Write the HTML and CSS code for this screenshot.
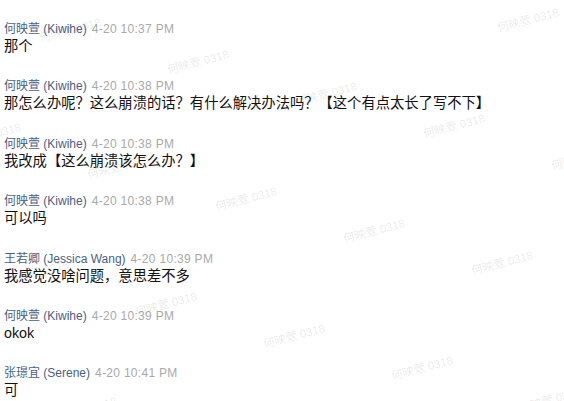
FILE: index.html
```html
<!DOCTYPE html>
<html lang="zh">
<head>
<meta charset="utf-8">
<title>Chat</title>
<link rel="stylesheet" href="styles.css">
</head>
<body>
<div class="chat">
  <div class="msg">
    <div class="meta"><span class="name">何映萱 (Kiwihe)</span><span class="time">4-20 10:37 PM</span></div>
    <div class="text">那个</div>
  </div>
  <div class="msg">
    <div class="meta"><span class="name">何映萱 (Kiwihe)</span><span class="time">4-20 10:38 PM</span></div>
    <div class="text">那怎么办呢？这么崩溃的话？有什么解决办法吗？【这个有点太长了写不下】</div>
  </div>
  <div class="msg">
    <div class="meta"><span class="name">何映萱 (Kiwihe)</span><span class="time">4-20 10:38 PM</span></div>
    <div class="text">我改成【这么崩溃该怎么办？】</div>
  </div>
  <div class="msg">
    <div class="meta"><span class="name">何映萱 (Kiwihe)</span><span class="time">4-20 10:38 PM</span></div>
    <div class="text">可以吗</div>
  </div>
  <div class="msg">
    <div class="meta"><span class="name">王若卿 (Jessica Wang)</span><span class="time">4-20 10:39 PM</span></div>
    <div class="text">我感觉没啥问题，意思差不多</div>
  </div>
  <div class="msg">
    <div class="meta"><span class="name">何映萱 (Kiwihe)</span><span class="time">4-20 10:39 PM</span></div>
    <div class="text">okok</div>
  </div>
  <div class="msg">
    <div class="meta"><span class="name">张璟宜 (Serene)</span><span class="time">4-20 10:41 PM</span></div>
    <div class="text">可</div>
  </div>
</div>
<div class="watermarks" aria-hidden="true">
  <span class="wm" style="left:406px;top:-11px">何映萱 0318</span>
  <span class="wm" style="left:528px;top:20px">何映萱 0318</span>
  <span class="wm" style="left:70px;top:30px">何映萱 0318</span>
  <span class="wm" style="left:198px;top:62px">何映萱 0318</span>
  <span class="wm" style="left:326px;top:94px">何映萱 0318</span>
  <span class="wm" style="left:454px;top:126px">何映萱 0318</span>
  <span class="wm" style="left:582px;top:158px">何映萱 0318</span>
  <span class="wm" style="left:-10px;top:135px">何映萱 0318</span>
  <span class="wm" style="left:118px;top:167px">何映萱 0318</span>
  <span class="wm" style="left:246px;top:199px">何映萱 0318</span>
  <span class="wm" style="left:374px;top:231px">何映萱 0318</span>
  <span class="wm" style="left:502px;top:263px">何映萱 0318</span>
  <span class="wm" style="left:38px;top:272px">何映萱 0318</span>
  <span class="wm" style="left:166px;top:304px">何映萱 0318</span>
  <span class="wm" style="left:294px;top:336px">何映萱 0318</span>
  <span class="wm" style="left:422px;top:368px">何映萱 0318</span>
  <span class="wm" style="left:550px;top:400px">何映萱 0318</span>
  <span class="wm" style="left:86px;top:409px">何映萱 0318</span>
</div>
</body>
</html>
```
FILE: styles.css
```css
html, body {
  margin: 0;
  padding: 0;
  background: #ffffff;
  overflow: hidden;
}
body {
  width: 564px;
  height: 401px;
  position: relative;
  font-family: "Liberation Sans", "Noto Sans CJK SC", sans-serif;
}
.chat {
  display: flex;
  flex-direction: column;
  gap: 22.4px;
  padding: 20px 4px 0 4px;
}
.msg {
  display: flex;
  flex-direction: column;
}
.meta {
  font-size: 12px;
  line-height: 18px;
  white-space: nowrap;
}
.name {
  color: #4a6184;
}
.time {
  color: #a9a9a9;
  margin-left: 5px;
  letter-spacing: 0.3px;
}
.text {
  font-size: 14.3px;
  line-height: 17px;
  color: #111111;
  white-space: nowrap;
}
.watermarks {
  position: absolute;
  inset: 0;
  pointer-events: none;
  overflow: hidden;
}
.wm {
  position: absolute;
  font-size: 11.5px;
  line-height: 14px;
  color: rgba(0, 0, 0, 0.1);
  white-space: nowrap;
  transform: translate(-50%, -50%) rotate(-15deg);
}
```
